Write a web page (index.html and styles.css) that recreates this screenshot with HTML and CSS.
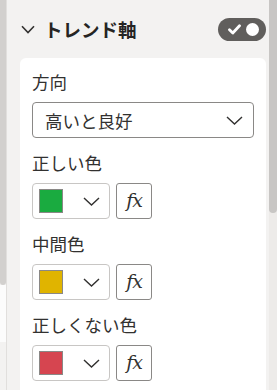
FILE: index.html
```html
<!DOCTYPE html>
<html lang="ja">
  <head>
    <meta charset="UTF-8" />
    <meta name="viewport" content="width=device-width, initial-scale=1.0" />
    <title>トレンド軸</title>
    <link rel="stylesheet" href="styles.css">
  </head>
  <body>
    <div class="left-rail">
      <div class="left-thumb"></div>
      <div class="left-pane"></div>
    </div>

    <div class="pane">
      <div class="section-header">
        <svg class="chevron" width="14" height="9" viewBox="0 0 14 9">
          <path d="M1 1.2 L7 7.5 L13 1.2" fill="none" stroke="#323130" stroke-width="1.6" />
        </svg>
        <h2 class="section-title">トレンド軸</h2>
        <div class="toggle">
          <svg width="13" height="11" viewBox="0 0 13 11">
            <path d="M1.5 5.8 L4.8 9 L11.5 1.8" fill="none" stroke="#fff" stroke-width="2.8" stroke-linecap="round" stroke-linejoin="round" />
          </svg>
          <span class="toggle-knob"></span>
        </div>
      </div>

      <div class="card">
        <label class="field-label">方向</label>
        <div class="dropdown">
          <span>高いと良好</span>
          <svg width="17" height="9" viewBox="0 0 17 9">
            <path d="M1 1 L8.5 8 L16 1" fill="none" stroke="#323130" stroke-width="1.4" />
          </svg>
        </div>

        <label class="field-label">正しい色</label>
        <div class="color-row">
          <div class="color-picker">
            <span class="swatch swatch-green"></span>
            <svg width="17" height="9" viewBox="0 0 17 9">
              <path d="M1 1 L8.5 8 L16 1" fill="none" stroke="#323130" stroke-width="1.4" />
            </svg>
          </div>
          <button class="fx-button">fx</button>
        </div>

        <label class="field-label">中間色</label>
        <div class="color-row">
          <div class="color-picker">
            <span class="swatch swatch-yellow"></span>
            <svg width="17" height="9" viewBox="0 0 17 9">
              <path d="M1 1 L8.5 8 L16 1" fill="none" stroke="#323130" stroke-width="1.4" />
            </svg>
          </div>
          <button class="fx-button">fx</button>
        </div>

        <label class="field-label">正しくない色</label>
        <div class="color-row">
          <div class="color-picker">
            <span class="swatch swatch-red"></span>
            <svg width="17" height="9" viewBox="0 0 17 9">
              <path d="M1 1 L8.5 8 L16 1" fill="none" stroke="#323130" stroke-width="1.4" />
            </svg>
          </div>
          <button class="fx-button">fx</button>
        </div>
      </div>
    </div>

    <div class="scroll-track">
      <div class="scroll-thumb"></div>
    </div>
  </body>
</html>
```

FILE: styles.css
```css
body {
  display: flex;
  width: 277px;
  height: 390px;
  margin: 0;
  overflow: hidden;
  background-color: #f3f2f1;
  font-family: "Noto Sans CJK JP", "Noto Sans", sans-serif;
  color: #323130;
}

.left-rail {
  width: 6px;
  border-right: 1px solid #e1dfdd;
  display: flex;
  flex-direction: column;
}

.left-thumb {
  height: 285px;
  background-color: #d2d0ce;
  border-radius: 0 0 3px 3px;
}

.left-pane {
  height: 57px;
  background-color: #fcfcfc;
}

.pane {
  flex: 1;
  display: flex;
  flex-direction: column;
  padding: 0 3px 0 13px;
}

.section-header {
  display: flex;
  align-items: center;
  height: 58px;
  padding-left: 1px;
}

.chevron {
  margin-top: 1px;
}

.section-title {
  flex: 1;
  margin: 0 0 0 9px;
  font-size: 18.5px;
  font-weight: 700;
  line-height: 24px;
  color: #252423;
}

.toggle {
  display: flex;
  align-items: center;
  justify-content: space-between;
  width: 48px;
  height: 23px;
  padding: 0 7px 0 10px;
  box-sizing: border-box;
  background-color: #605e5c;
  border-radius: 12px;
  margin-top: 1px;
}

.toggle-knob {
  width: 13px;
  height: 13px;
  border-radius: 50%;
  background-color: #fff;
}

.card {
  flex: 1;
  background-color: #fff;
  border-radius: 6px 6px 0 0;
  padding: 13px 12px 0;
  overflow: hidden;
}

.field-label {
  display: block;
  font-size: 17.5px;
  line-height: 22px;
  margin-bottom: 9px;
}

.dropdown {
  display: flex;
  align-items: center;
  justify-content: space-between;
  height: 36px;
  box-sizing: border-box;
  padding: 0 10px 0 12px;
  border: 1px solid #8a8886;
  border-radius: 4px;
  font-size: 17.5px;
  margin-bottom: 14px;
}

.color-row {
  display: flex;
  gap: 6px;
  margin-bottom: 14px;
}

.color-picker {
  display: flex;
  align-items: center;
  justify-content: space-between;
  width: 78px;
  height: 36px;
  box-sizing: border-box;
  padding: 0 9px 0 6px;
  border: 1px solid #c8c6c4;
  border-radius: 4px;
}

.swatch {
  width: 24px;
  height: 24px;
  box-sizing: border-box;
  border: 1px solid #8a8886;
}

.swatch-green {
  background-color: #1aab40;
}

.swatch-yellow {
  background-color: #e0b400;
}

.swatch-red {
  background-color: #d64550;
}

.fx-button {
  width: 36px;
  height: 36px;
  padding: 0 0 2px;
  border: 1px solid #8a8886;
  border-radius: 3px;
  background-color: #fff;
  font-family: "DejaVu Serif", "Liberation Serif", serif;
  font-style: italic;
  font-size: 19px;
  letter-spacing: -1px;
  color: #323130;
}

.scroll-track {
  width: 8px;
  background-color: #edebe9;
}

.scroll-thumb {
  height: 213px;
  background-color: #c8c6c4;
  border-radius: 0 0 4px 4px;
}
```
